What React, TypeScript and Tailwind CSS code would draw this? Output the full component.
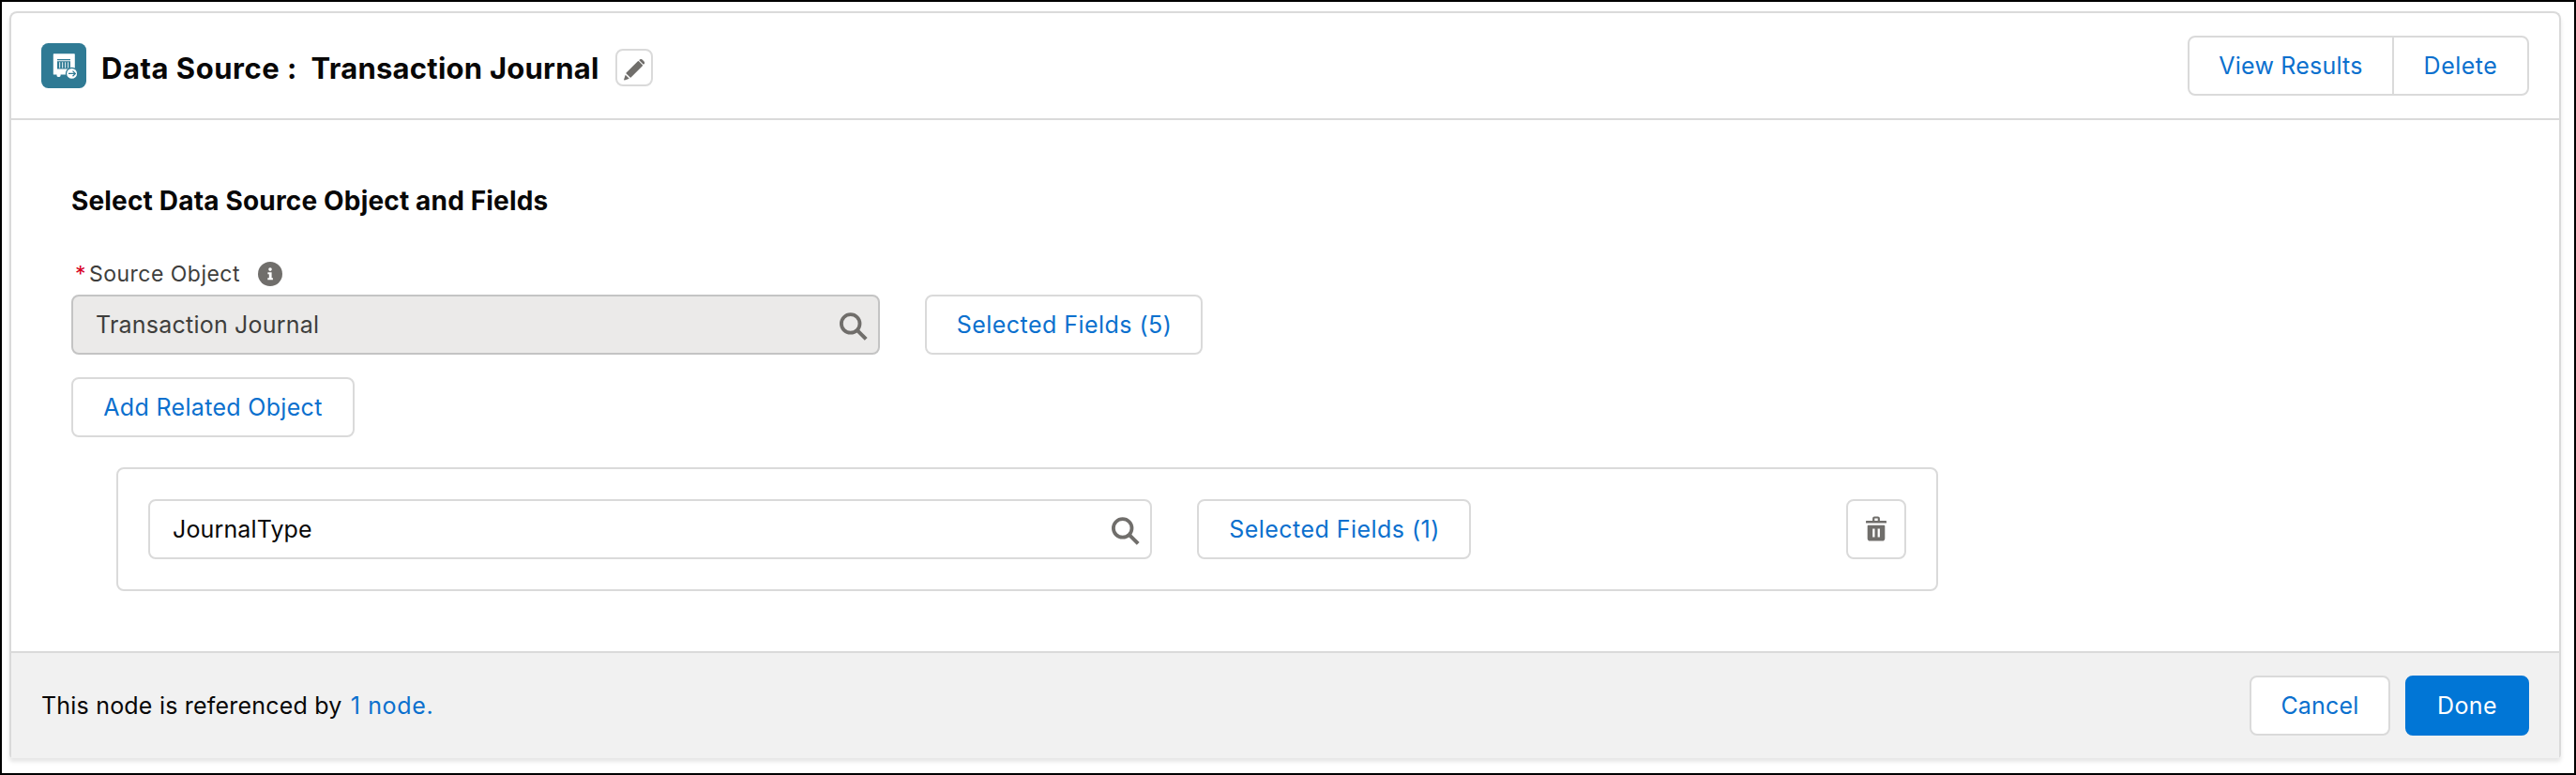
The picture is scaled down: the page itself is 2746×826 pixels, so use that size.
import clsx from "clsx";
import type { ReactNode } from "react";

type ButtonProps = {
  children: ReactNode;
  className?: string;
};

const Button = ({ children, className }: ButtonProps) => {
  return (
    <button
      type="button"
      className={clsx(
        "flex h-16 shrink-0 items-center justify-center rounded-lg border-2 text-[25px]",
        className
      )}
    >
      {children}
    </button>
  );
};

const SearchIcon = () => {
  return (
    <svg width="30" height="30" viewBox="0 0 30 30" fill="none" stroke="#706e6b" className="mt-1 shrink-0">
      <circle cx="11.7" cy="11.9" r="9.8" strokeWidth="3.8" />
      <path d="M18.4 18.6 28.2 28.4" strokeWidth="4" />
    </svg>
  );
};

const PencilIcon = () => {
  return (
    <svg width="23" height="23" viewBox="0 0 23 23" fill="#706e6b">
      <path d="M2.6 14.6 14.9 2.3a.8.8 0 0 1 1.1 0l3.9 3.9a.8.8 0 0 1 0 1.1L7.6 19.6a.6.6 0 0 1-.9 0l-4.1-4.1a.6.6 0 0 1 0-.9Z" />
      <path d="m16.6.8.3-.3c.8-.7 2-.7 2.7 0l2 2c.8.8.8 2 0 2.8l-.3.3c-.2.2-.5.2-.7 0l-4-4a.5.5 0 0 1 0-.8Z" />
      <path d="M1.7 16.7 5.8 20.8.9 22.4c-.5.2-.9-.2-.8-.7Z" />
    </svg>
  );
};

const TrashIcon = () => {
  return (
    <svg width="22" height="27" viewBox="0 0 22 27">
      <path d="M8.2 5.5V2.4q0-.9 1-.9h3.6q1 0 1 .9v3.1" fill="none" stroke="#706e6b" strokeWidth="2.2" />
      <rect y="5" width="22" height="2.6" rx=".6" fill="#706e6b" />
      <path
        fillRule="evenodd"
        fill="#706e6b"
        d="M2.6 9.8h16.8q.9 0 .9.9v13q0 2.8-2.8 2.8H4.5q-2.8 0-2.8-2.8v-13q0-.9.9-.9ZM7.2 13.6v9h2.3v-9Zm5.4 0v9h2.3v-9Z"
      />
    </svg>
  );
};

const InfoIcon = () => {
  return (
    <svg width="26" height="26" viewBox="0 0 26 26">
      <circle cx="13" cy="13" r="13" fill="#706e6b" />
      <circle cx="13" cy="8.1" r="1.8" fill="#fff" />
      <path d="M10.4 11.3h4.2v5.9h1.3v2h-5.6v-2h1.5v-3.9h-1.4Z" fill="#fff" />
    </svg>
  );
};

const DataSourceIcon = () => {
  return (
    <svg width="48" height="48" viewBox="0 0 48 48" className="shrink-0">
      <rect width="48" height="48" rx="7.5" fill="#2f7a94" />
      <path d="M13.4 11.3h21.8q.6 0 .6.6v21.6H20.6v1q0 1.4-1.4 1.4h-1.3q-1.4 0-1.4-1.4v-1h-3.1q-.6 0-.6-.6v-21q0-.6.6-.6Z" fill="#fff" />
      <path d="M17 17h14v1.3H17zM17 19.2h14v8.2H17z" fill="#2f7a94" />
      <path d="M19 20.2h1.2v6.2h-1.2zM22 20.2h1.2v6.2h-1.2zM25 20.2h1.2v6.2h-1.2zM28 20.2h1.2v6.2h-1.2z" fill="#d5e5ea" />
      <circle cx="32.6" cy="32.4" r="6.1" fill="#fff" stroke="#2f7a94" strokeWidth="1.3" />
      <path d="M29 32.4h7M33.5 29.6l2.8 2.8-2.8 2.8" fill="none" stroke="#2f7a94" strokeWidth="1.3" />
    </svg>
  );
};

const Header = () => {
  return (
    <header className="flex h-[114px] items-center justify-between border-b-2 border-[#dadada] px-8">
      <div className="flex items-center">
        <DataSourceIcon />
        <h1 className="ml-4 flex w-[548px] pt-1.5 text-[31px] font-bold whitespace-nowrap">
          <span className="w-[223.5px] tracking-[0.52px]">Data Source :</span>
          <span className="tracking-[0.25px]">Transaction Journal</span>
        </h1>
        <button
          type="button"
          className="mt-1 flex size-10 items-center justify-center rounded-lg border-2 border-[#dadada] pt-1"
        >
          <PencilIcon />
        </button>
      </div>
      <div className="flex">
        <Button className="w-[220px] rounded-r-none border-[#dadada] pt-0.5 tracking-[0.22px] text-[#0b70ce]">
          View Results
        </Button>
        <Button className="-ml-0.5 w-[146px] rounded-l-none border-[#dadada] pt-0.5 tracking-[0.5px] text-[#0b70ce]">
          Delete
        </Button>
      </div>
    </header>
  );
};

const Footer = () => {
  return (
    <footer className="flex h-[114px] items-center justify-between border-t-2 border-[#dadada] bg-[#f1f1f1] px-8">
      <p className="pt-0.5 text-[25px] tracking-[0.2px]">
        This node is referenced by{" "}
        <a className="ml-0.5 tracking-[0.65px] text-[#0b70ce]">1 node.</a>
      </p>
      <div className="flex gap-4">
        <Button className="w-[150px] border-[#dadada] bg-white pt-0.5 tracking-[0.2px] text-[#0b70ce]">
          Cancel
        </Button>
        <Button className="w-[132px] border-[#0176d6] bg-[#0176d6] pt-0.5 tracking-[0.35px] text-white">
          Done
        </Button>
      </div>
    </footer>
  );
};

export default function App() {
  return (
    <div className="h-[826px] w-[2746px] border-2 border-black bg-white pt-2.5 pr-3.5 pl-2 font-['Inter',sans-serif] text-[#080707]">
      <section className="h-[796px] rounded-t-lg rounded-b-sm border-x-2 border-t-2 border-[#dadada] shadow-[0_4px_4px_0_rgba(0,0,0,0.1)]">
        <Header />
        <main className="h-[566px] px-16 pt-[66px]">
          <h2 className="text-[28px] leading-10 font-bold tracking-[0.17px]">
            Select Data Source Object and Fields
          </h2>
          <div className="mt-11 flex h-7 items-center text-[23px] leading-7 text-[#3e3e3c]">
            <span className="w-[19px] pl-1 text-[#d8001f]">*</span>
            <span className="w-[180px] tracking-[0.48px]">Source Object</span>
            <InfoIcon />
          </div>
          <div className="mt-2 flex gap-12">
            <div className="flex h-16 w-[862px] items-center justify-between rounded-lg border-2 border-[#c4c4c4] bg-[#ebeae9] pr-[11px] pl-6 text-[25px] text-[#3e3e3c]">
              <span className="pt-0.5 tracking-[0.22px]">Transaction Journal</span>
              <SearchIcon />
            </div>
            <Button className="w-[296px] border-[#dadada] pt-0.5 pl-px tracking-[0.46px] text-[#0b70ce]">
              Selected Fields (5)
            </Button>
          </div>
          <Button className="mt-6 w-[302px] border-[#dadada] pt-0.5 tracking-[0.32px] text-[#0b70ce]">
            Add Related Object
          </Button>
          <div className="mt-8 ml-12 flex w-[1942px] rounded-lg border-2 border-[#dadada] p-8">
            <div className="flex h-16 w-[1070px] items-center justify-between rounded-lg border-2 border-[#dadada] pr-[11px] pl-6 text-[25px]">
              <span className="pt-0.5 tracking-[0.14px]">JournalType</span>
              <SearchIcon />
            </div>
            <Button className="ml-12 w-[292px] border-[#dadada] pt-0.5 pl-px tracking-[0.46px] text-[#0b70ce]">
              Selected Fields (1)
            </Button>
            <Button className="ml-auto w-16 border-[#dadada] pb-px">
              <TrashIcon />
            </Button>
          </div>
        </main>
        <Footer />
      </section>
    </div>
  );
}
